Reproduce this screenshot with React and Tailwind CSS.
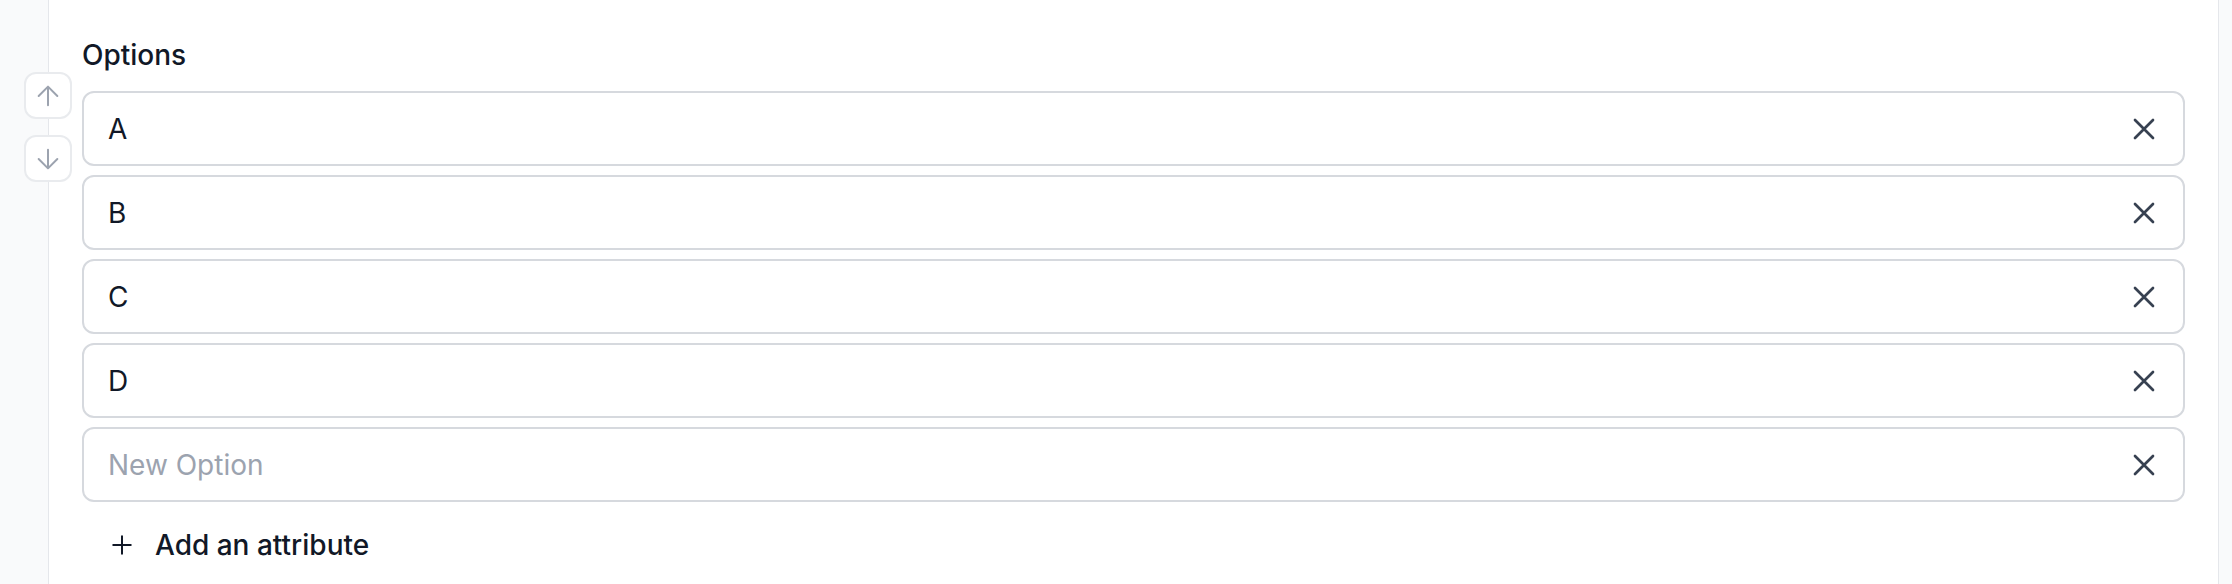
import React from "react";

function XIcon() {
  return (
    <svg width="36" height="36" viewBox="0 0 24 24" fill="none" stroke="#374151" strokeWidth="1.8" strokeLinecap="round" strokeLinejoin="round">
      <path d="M6 6L18 18M18 6L6 18" />
    </svg>
  );
}

function ArrowUp() {
  return (
    <svg width="32" height="32" viewBox="0 0 24 24" fill="none" stroke="#9ca3af" strokeWidth="1.5" strokeLinecap="round" strokeLinejoin="round">
      <path d="M5 12l7-7 7 7M12 19V5" />
    </svg>
  );
}

function ArrowDown() {
  return (
    <svg width="32" height="32" viewBox="0 0 24 24" fill="none" stroke="#9ca3af" strokeWidth="1.5" strokeLinecap="round" strokeLinejoin="round">
      <path d="M12 5v14M19 12l-7 7-7-7" />
    </svg>
  );
}

function PlusIcon() {
  return (
    <svg width="30" height="30" viewBox="0 0 24 24" fill="none" stroke="#111827" strokeWidth="1.6" strokeLinecap="round" strokeLinejoin="round">
      <path d="M5 12h14M12 5v14" />
    </svg>
  );
}

const options = ["A", "B", "C", "D"];

function OptionRow({ value, placeholder }) {
  return (
    <div className="flex h-[75px] items-center justify-between rounded-[12px] border-2 border-[#d6d9de] bg-white pl-[24px] pr-[21px]">
      {value ? (
        <span className="text-[28px] text-[#111827]">{value}</span>
      ) : (
        <span className="text-[28px] text-[#9ca3af]">{placeholder}</span>
      )}
      <XIcon />
    </div>
  );
}

export default function App() {
  return (
    <div className="flex h-[584px] w-[2232px] overflow-hidden bg-white" style={{ fontFamily: "Inter, 'Noto Sans', sans-serif" }}>
      <div className="relative w-[49px] shrink-0 border-r border-[#e5e7eb] bg-[#f9fafb]">
        <div className="absolute left-[24px] top-[72px] z-10 flex flex-col gap-[16px]">
          <button className="flex h-[47px] w-[48px] items-center justify-center rounded-[12px] border-2 border-[#e9ebee] bg-white">
            <ArrowUp />
          </button>
          <button className="flex h-[47px] w-[48px] items-center justify-center rounded-[12px] border-2 border-[#e9ebee] bg-white">
            <ArrowDown />
          </button>
        </div>
      </div>
      <div className="flex min-w-0 flex-1 flex-col px-[33px] pt-[35px]">
        <div className="h-[40px] text-[28px] font-medium leading-[40px] text-[#111827]">Options</div>
        <div className="mt-[16px] flex flex-col gap-[9px]">
          {options.map((o) => (
            <OptionRow key={o} value={o} />
          ))}
          <OptionRow placeholder="New Option" />
        </div>
        <button className="mt-[19px] flex h-[48px] items-center gap-[18px] pl-[25px]">
          <PlusIcon />
          <span className="text-[28px] font-medium text-[#111827]">Add an attribute</span>
        </button>
      </div>
      <div className="w-[14px] shrink-0 border-l border-[#e5e7eb] bg-[#f9fafb]" />
    </div>
  );
}
